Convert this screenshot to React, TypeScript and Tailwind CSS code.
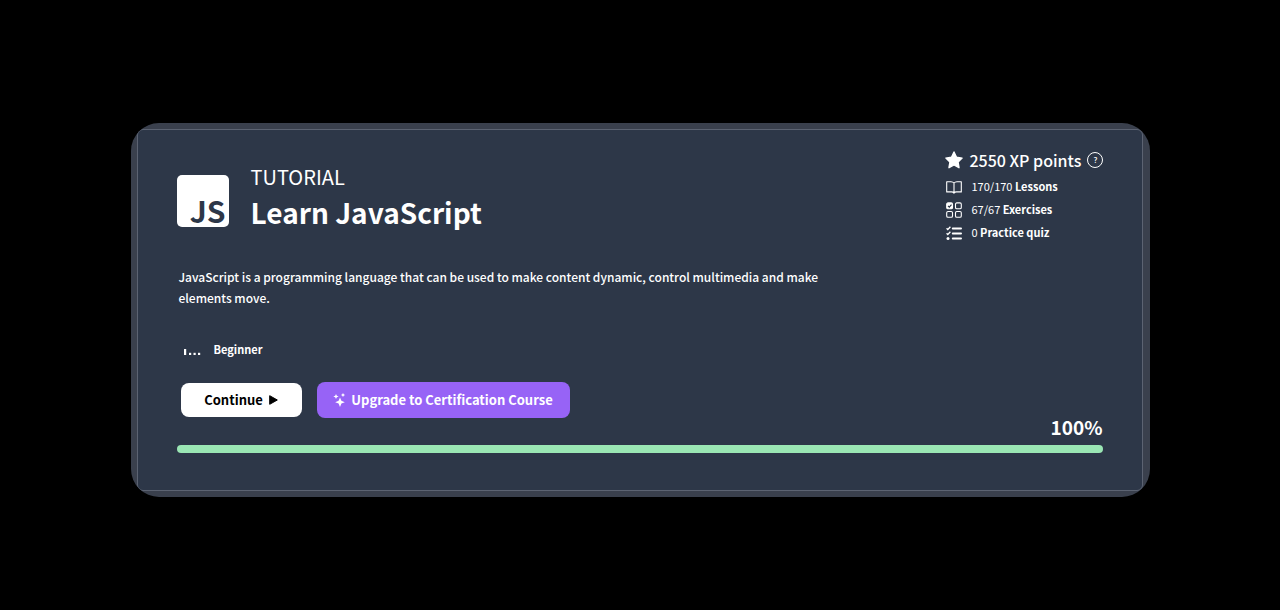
import type { ReactNode } from "react";

function StatRow({ icon, value, label }: { icon: ReactNode; value: string; label: string }) {
  return (
    <li className="flex h-[23px] items-center gap-2.5">
      {icon}
      <span>
        {value} <strong className="font-bold">{label}</strong>
      </span>
    </li>
  );
}

function StarIcon() {
  return (
    <svg className="size-5 shrink-0" viewBox="0 0 20 20" fill="currentColor" stroke="currentColor" strokeWidth="1.4" strokeLinejoin="round" aria-hidden="true">
      <path d="M10 2 12.500 7.300l5.600.8-4 4 .9 5.600L10 15l-5 2.700.9-5.600-4-4 5.600-.8z" />
    </svg>
  );
}

function BookIcon() {
  return (
    <svg className="mt-0.5 size-4 shrink-0" viewBox="0 0 16 16" fill="none" stroke="currentColor" strokeWidth="1.1" strokeLinejoin="round" aria-hidden="true">
      <path d="M8 4C7.300 3.100 6.300 2.700 5 2.700H.7v10.200H5.500c1.200 0 2 .4 2.500 1.200.5-.8 1.300-1.200 2.500-1.200h4.800V2.700H11C9.700 2.700 8.700 3.100 8 4zM8 4v10" />
    </svg>
  );
}

function ExercisesIcon() {
  return (
    <svg className="mt-0.5 size-4 shrink-0" viewBox="0 0 16 16" fill="none" stroke="currentColor" strokeWidth="1.100" aria-hidden="true">
      <rect x=".7" y=".9" width="5.800" height="5.800" rx="1.300" fill="currentColor" />
      <rect x="9.500" y=".9" width="5.800" height="5.800" rx="1.300" />
      <rect x=".7" y="9.500" width="5.800" height="5.800" rx="1.300" />
      <rect x="9.500" y="9.500" width="5.800" height="5.800" rx="1.300" />
      <path d="m2 3.800 1.300 1.300 2.200-2.500" stroke="#2d3748" strokeWidth="1.200" />
    </svg>
  );
}

function QuizIcon() {
  return (
    <svg className="mt-0.5 size-4 shrink-0" viewBox="0 0 16 16" fill="none" stroke="currentColor" aria-hidden="true">
      <path d="m.6 3.200 1.200 1.300L4.400 1.800M.6 8.200l1.200 1.300 2.600-2.700" strokeWidth="1.300" />
      <path d="M6.800 3.500H15M6.800 8.500H15M6.800 13.500H15" strokeWidth="2" strokeLinecap="round" />
      <circle cx="2" cy="13.500" r="1.500" fill="currentColor" stroke="none" />
    </svg>
  );
}

function SparklesIcon() {
  return (
    <svg className="size-3.5 shrink-0" viewBox="0 0 14 14" fill="currentColor" aria-hidden="true">
      <path d="M7 4.500 8.400 7.700 11.800 9.200 8.400 10.600 7 14 5.600 10.600 2.200 9.200 5.600 7.700z" />
      <path d="m3 1 .8 1.700 1.900.8-1.900.8L3 6l-.8-1.700L.3 3.500l1.900-.8zM10 0l.7 1.300L12 2l-1.300.7L10 4l-.7-1.300L8 2l1.300-.7z" />
    </svg>
  );
}

function LevelIcon() {
  return (
    <svg className="h-3 w-[18px] shrink-0" viewBox="0 0 18 12" fill="currentColor" aria-hidden="true">
      <rect x="1" y="4" width="2.200" height="6" />
      <rect x="6" y="7.800" width="2.200" height="2.200" />
      <rect x="10.500" y="7.800" width="2.200" height="2.200" />
      <rect x="15" y="7.800" width="2.200" height="2.200" />
    </svg>
  );
}

export default function App() {
  return (
    <main className="min-h-screen bg-black px-4 pt-[123px] pb-8 font-['Noto_Sans_CJK_SC',sans-serif] text-white">
      <article className="mx-auto w-full max-w-[1019px] overflow-hidden rounded-[28px] bg-[#3a404d] py-1.5 pr-[7px] pl-1.5">
        <div className="rounded-md border border-[#5c6372] bg-[#2d3748] px-[39px] pt-5 pb-[37px]">
          <header className="flex justify-between gap-6">
            <div className="flex items-center gap-[22px] pt-0.5">
              <div className="mt-1.5 flex size-[52px] items-end justify-end rounded-[5px] bg-white pr-[3px] text-[30px] leading-[34px] font-bold text-[#2d3748]">
                JS
              </div>
              <div>
                <p className="text-xl leading-7">TUTORIAL</p>
                <h1 className="text-[28px] leading-[42px] font-bold">Learn JavaScript</h1>
              </div>
            </div>
            <section className="w-[159px]" aria-label="Your progress">
              <div className="flex h-5 items-center gap-1.5 text-base leading-5 font-medium whitespace-nowrap">
                <StarIcon />
                <span>2550 XP points</span>
                <button type="button" aria-label="About XP points" className="flex size-4 shrink-0 items-center justify-center rounded-full border border-white text-[8px] leading-none">
                  ?
                </button>
              </div>
              <ul className="mt-1 ml-0.5 text-[11px] leading-4">
                <StatRow icon={<BookIcon />} value="170/170" label="Lessons" />
                <StatRow icon={<ExercisesIcon />} value="67/67" label="Exercises" />
                <StatRow icon={<QuizIcon />} value="0" label="Practice quiz" />
              </ul>
            </section>
          </header>

          <p className="mt-[23px] ml-0.5 max-w-[670px] text-xs leading-[21px] font-medium">
            JavaScript is a programming language that can be used to make content dynamic, control multimedia and make
            elements move.
          </p>

          <div className="mt-[33px] ml-1.5 flex items-end gap-[13px] text-[11px] leading-4 font-bold">
            <LevelIcon />
            <span>Beginner</span>
          </div>

          <div className="mt-[25px] flex items-start justify-between">
            <div className="flex items-center gap-[15px] pl-1 text-[13px] leading-5 font-bold">
              <button type="button" className="flex h-[34px] w-[121px] items-center justify-center gap-1.5 rounded-lg bg-white text-black">
                Continue
                <svg className="h-2.5 w-[9px]" viewBox="0 0 9 10" fill="currentColor" stroke="currentColor" strokeLinejoin="round" aria-hidden="true">
                  <path d="M.7.7v8.600L8.300 5z" />
                </svg>
              </button>
              <button type="button" className="flex h-9 w-[253px] items-center justify-center gap-1 rounded-lg bg-[#9763f6] whitespace-nowrap">
                <SparklesIcon />
                Upgrade to Certification Course
              </button>
            </div>
            <p className="mt-[33px] text-[19px] leading-6 font-bold">100%</p>
          </div>

          <div className="mt-1.5 h-2 rounded-full bg-[#9ae6b4]" role="progressbar" aria-label="Course completion" aria-valuenow={100} aria-valuemin={0} aria-valuemax={100} />
        </div>
      </article>
    </main>
  );
}
